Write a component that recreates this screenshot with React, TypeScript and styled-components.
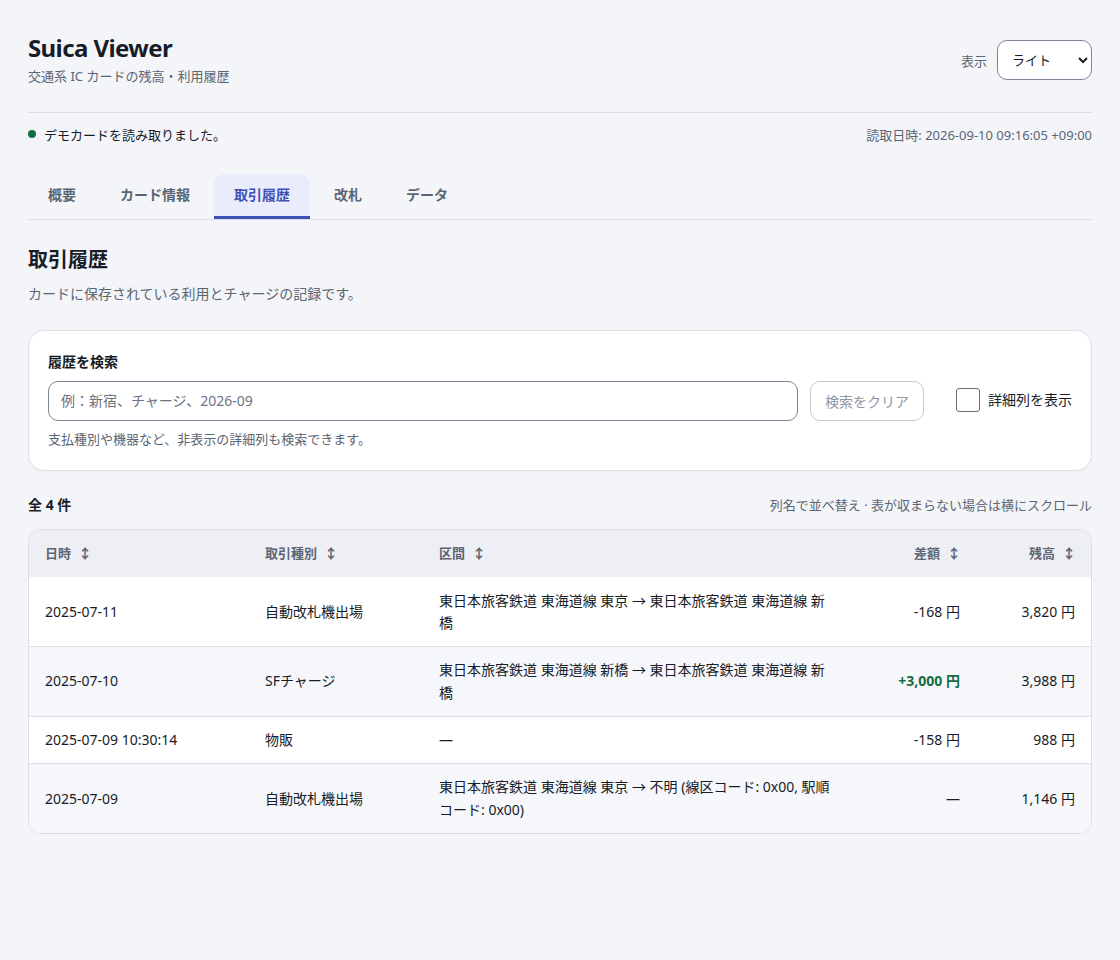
import React from 'react'
import styled, { createGlobalStyle } from 'styled-components'

const GlobalStyle = createGlobalStyle`
  html, body {
    margin: 0;
    background: #f3f5f9;
    color: #171c26;
    font-family: "Noto Sans", "Noto Sans CJK JP", sans-serif;
    font-size: 14px;
  }
  * { box-sizing: border-box; }
`

const Page = styled.div`
  padding: 28px 28px 0;
  min-height: 960px;
`

const Header = styled.header`
  display: flex;
  justify-content: space-between;
  align-items: flex-start;
  padding-bottom: 27px;
  border-bottom: 1px solid #dcdfe6;
`

const Title = styled.h1`
  margin: 0;
  font-size: 24px;
  line-height: 40px;
  font-weight: 700;
  letter-spacing: -0.025em;
`

const Subtitle = styled.p`
  margin: -1px 0 0;
  font-size: 13px;
  line-height: 18px;
  color: #5c6573;
`

const ThemePicker = styled.label`
  display: flex;
  align-items: center;
  gap: 10px;
  margin-top: 12px;
  font-size: 13px;
  color: #5c6573;
`

const ThemeSelect = styled.select`
  width: 95px;
  height: 40px;
  padding: 0 8px 0 10px;
  border: 1px solid #7d8496;
  border-radius: 10px;
  background: #fff;
  color: #171c26;
  font: inherit;
`

const StatusBar = styled.div`
  display: flex;
  justify-content: space-between;
  align-items: center;
  height: 44px;
  padding-bottom: 2px;
  font-size: 13px;
`

const StatusText = styled.span`
  display: flex;
  align-items: center;
  gap: 8px;
`

const StatusDot = styled.span`
  width: 8px;
  height: 8px;
  border-radius: 50%;
  background: #146c43;
`

const ReadTime = styled.span`
  color: #5c6573;
`

const Tabs = styled.nav`
  display: flex;
  gap: 4px;
  margin-top: 17px;
  border-bottom: 1px solid #dcdfe6;
`

const Tab = styled.button<{ $active?: boolean }>`
  height: 45px;
  padding: 0 20px 2px;
  border: 0;
  border-bottom: 3px solid ${p => (p.$active ? '#3f51b5' : 'transparent')};
  border-radius: 10px 10px 0 0;
  background: ${p => (p.$active ? '#e8ecfb' : 'transparent')};
  color: ${p => (p.$active ? '#3f51b5' : '#5c6573')};
  font: inherit;
  font-size: 14px;
  font-weight: 700;
`

const Heading = styled.h2`
  margin: 25px 0 0;
  font-size: 20px;
  line-height: 30px;
  font-weight: 700;
`

const Lead = styled.p`
  margin: 9px 0 0;
  font-size: 14px;
  line-height: 20px;
  color: #5c6573;
`

const SearchCard = styled.section`
  margin-top: 26px;
  height: 141px;
  padding: 20px 19px 0 19px;
  border: 1px solid #dcdfe6;
  border-radius: 16px;
  background: #fff;
  box-shadow: 0 1px 2px rgba(23, 28, 38, 0.04);
`

const SearchLabel = styled.div`
  font-size: 14px;
  font-weight: 700;
  line-height: 21px;
`

const SearchRow = styled.div`
  display: flex;
  align-items: center;
  margin-top: 9px;
`

const SearchInput = styled.input`
  width: 750px;
  height: 40px;
  padding: 0 12px 2px;
  border: 1px solid #7d8496;
  border-radius: 10px;
  background: #fff;
  color: #171c26;
  font: inherit;
  &::placeholder {
    color: #6b7280;
    opacity: 1;
  }
`

const ClearButton = styled.button`
  width: 114px;
  height: 40px;
  margin-left: 12px;
  border: 1px solid #c6cad3;
  border-radius: 10px;
  background: #fff;
  color: #8f95a1;
  font: inherit;
  font-size: 14px;
`

const DetailToggle = styled.label`
  display: flex;
  align-items: center;
  gap: 8px;
  margin-left: auto;
  padding-bottom: 2px;
  font-size: 14px;
  line-height: 18px;
`

const CheckBox = styled.input`
  appearance: none;
  width: 24px;
  height: 24px;
  margin: 0;
  border: 1px solid #6b7280;
  border-radius: 3px;
  background: #fff;
`

const Hint = styled.p`
  margin: 9px 0 0;
  font-size: 13px;
  line-height: 18px;
  color: #5c6573;
`

const SummaryRow = styled.div`
  display: flex;
  justify-content: space-between;
  align-items: center;
  height: 20px;
  margin-top: 23px;
`

const Count = styled.strong`
  font-size: 14px;
  font-weight: 700;
`

const SummaryNote = styled.span`
  font-size: 13px;
  color: #5c6573;
`

const TableWrap = styled.div`
  margin-top: 15px;
  border: 1px solid #dcdfe6;
  border-radius: 12px;
  background: #fff;
  overflow: hidden;
`

const Table = styled.table`
  width: 100%;
  table-layout: fixed;
  border-collapse: collapse;
`

const Th = styled.th<{ $right?: boolean }>`
  height: 47px;
  padding: 0 16px 4px;
  background: #eeeff5;
  color: #5c6573;
  font-size: 13px;
  font-weight: 700;
  text-align: ${p => (p.$right ? 'right' : 'left')};
`

const SortMark = styled.span`
  display: inline-flex;
  justify-content: center;
  width: 12px;
  margin-left: 8px;
  color: #5c6573;
  font-size: 14px;
`

const Row = styled.tr<{ $zebra?: boolean }>`
  background: ${p => (p.$zebra ? '#f6f7fb' : '#fff')};
  border-top: 1px solid #dcdfe6;
  &:first-child {
    border-top: 0;
  }
`

const Td = styled.td<{ $right?: boolean; $plus?: boolean }>`
  padding: 12.5px 16px 11.5px;
  font-size: 14px;
  line-height: 1.6;
  text-align: ${p => (p.$right ? 'right' : 'left')};
  color: ${p => (p.$plus ? '#146c43' : 'inherit')};
  font-weight: ${p => (p.$plus ? 700 : 400)};
`

const columns = [
  { name: '日時', width: 220 },
  { name: '取引種別', width: 174 },
  { name: '区間', width: 424 },
  { name: '差額', width: 129, right: true },
  { name: '残高', width: 115, right: true },
]

const rows = [
  {
    date: '2025-07-11',
    kind: '自動改札機出場',
    route: '東日本旅客鉄道 東海道線 東京 → 東日本旅客鉄道 東海道線 新橋',
    diff: '-168 円',
    balance: '3,820 円',
  },
  {
    date: '2025-07-10',
    kind: 'SFチャージ',
    route: '東日本旅客鉄道 東海道線 新橋 → 東日本旅客鉄道 東海道線 新橋',
    diff: '+3,000 円',
    balance: '3,988 円',
    plus: true,
  },
  {
    date: '2025-07-09 10:30:14',
    kind: '物販',
    route: '—',
    diff: '-158 円',
    balance: '988 円',
  },
  {
    date: '2025-07-09',
    kind: '自動改札機出場',
    route: '東日本旅客鉄道 東海道線 東京 → 不明 (線区コード: 0x00, 駅順コード: 0x00)',
    diff: '—',
    balance: '1,146 円',
  },
]

const tabs = ['概要', 'カード情報', '取引履歴', '改札', 'データ']

export default function App() {
  return (
    <Page lang="ja">
      <GlobalStyle />
      <Header>
        <div>
          <Title>Suica Viewer</Title>
          <Subtitle>交通系 IC カードの残高・利用履歴</Subtitle>
        </div>
        <ThemePicker>
          表示
          <ThemeSelect defaultValue="light">
            <option value="light">ライト</option>
            <option value="dark">ダーク</option>
          </ThemeSelect>
        </ThemePicker>
      </Header>
      <StatusBar>
        <StatusText>
          <StatusDot />
          デモカードを読み取りました。
        </StatusText>
        <ReadTime>読取日時: 2026-09-10 09:16:05 +09:00</ReadTime>
      </StatusBar>
      <Tabs>
        {tabs.map(tab => (
          <Tab key={tab} $active={tab === '取引履歴'}>
            {tab}
          </Tab>
        ))}
      </Tabs>
      <Heading>取引履歴</Heading>
      <Lead>カードに保存されている利用とチャージの記録です。</Lead>
      <SearchCard>
        <SearchLabel>履歴を検索</SearchLabel>
        <SearchRow>
          <SearchInput placeholder="例：新宿、チャージ、2026-09" />
          <ClearButton disabled>検索をクリア</ClearButton>
          <DetailToggle>
            <CheckBox type="checkbox" />
            詳細列を表示
          </DetailToggle>
        </SearchRow>
        <Hint>支払種別や機器など、非表示の詳細列も検索できます。</Hint>
      </SearchCard>
      <SummaryRow>
        <Count>全 4 件</Count>
        <SummaryNote>列名で並べ替え · 表が収まらない場合は横にスクロール</SummaryNote>
      </SummaryRow>
      <TableWrap>
        <Table>
          <colgroup>
            {columns.map(col => (
              <col key={col.name} width={col.width} />
            ))}
          </colgroup>
          <thead>
            <tr>
              {columns.map(col => (
                <Th key={col.name} $right={col.right}>
                  {col.name}
                  <SortMark>↕</SortMark>
                </Th>
              ))}
            </tr>
          </thead>
          <tbody>
            {rows.map((row, i) => (
              <Row key={row.date + row.kind} $zebra={i % 2 === 1}>
                <Td>{row.date}</Td>
                <Td>{row.kind}</Td>
                <Td>{row.route}</Td>
                <Td $right $plus={row.plus}>
                  {row.diff}
                </Td>
                <Td $right>{row.balance}</Td>
              </Row>
            ))}
          </tbody>
        </Table>
      </TableWrap>
    </Page>
  )
}
